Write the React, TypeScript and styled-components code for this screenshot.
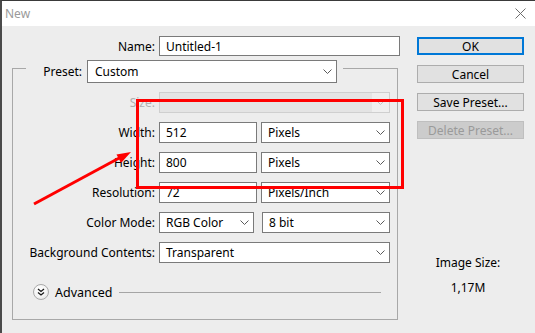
import React from "react";
import styled, { createGlobalStyle } from "styled-components";

const GlobalStyle = createGlobalStyle`
  html, body {
    margin: 0;
    padding: 0;
    background: #ededed;
  }
  body {
    font-family: "Noto Sans", "Liberation Sans", sans-serif;
    font-size: 12px;
    color: #000;
  }
`;

const Chevron = ({ color = "#5a5a5a" }: { color?: string }) => (
  <svg width="9" height="5" viewBox="0 0 9 5">
    <path d="M0.5 0.5 L4.5 4.5 L8.5 0.5" fill="none" stroke={color} strokeWidth="1" />
  </svg>
);

interface DropSelectProps {
  value?: string;
  width?: number;
  disabled?: boolean;
}

function DropSelect(props: DropSelectProps) {
  return (
    <SelectBox $w={props.width} $disabled={props.disabled}>
      <SelectText>{props.value}</SelectText>
      <DropButton $disabled={props.disabled}>
        <Chevron color={props.disabled ? "#c4c4c4" : "#5a5a5a"} />
      </DropButton>
    </SelectBox>
  );
}

interface FieldRowProps {
  label: string;
  disabled?: boolean;
  labelWidth?: number;
  gap?: number;
  children: React.ReactNode;
}

function FieldRow(props: FieldRowProps) {
  return (
    <Row $labelW={props.labelWidth ?? 142}>
      <Label $disabled={props.disabled}>{props.label}</Label>
      <Fields $gap={props.gap ?? 4}>{props.children}</Fields>
    </Row>
  );
}

function App() {
  return (
    <Screen>
      <GlobalStyle />
      <Window>
        <TitleBar>
          <Title>New</Title>
          <svg width="11" height="11" viewBox="0 0 11 11">
            <path d="M0.5 0.5 L10.5 10.5 M10.5 0.5 L0.5 10.5" stroke="#6d6d6d" strokeWidth="1" />
          </svg>
        </TitleBar>

        <Body>
          <Main>
            <FieldRow label="Name:" labelWidth={143}>
              <TextBox>Untitled-1</TextBox>
            </FieldRow>

            <Group>
              <Legend>
                <LegendInner>
                  <PresetLabel>Preset:</PresetLabel>
                  <PresetSelect>
                    <SelectText>Custom</SelectText>
                    <DropButton>
                      <Chevron />
                    </DropButton>
                  </PresetSelect>
                </LegendInner>
              </Legend>

              <GroupRows>
                <FieldRow label="Size:" disabled>
                  <DropSelect disabled />
                </FieldRow>
                <FieldRow label="Width:">
                  <TextBox $w={98}>512</TextBox>
                  <DropSelect value="Pixels" />
                </FieldRow>
                <FieldRow label="Height:">
                  <TextBox $w={98}>800</TextBox>
                  <DropSelect value="Pixels" />
                </FieldRow>
                <FieldRow label="Resolution:">
                  <TextBox $w={98}>72</TextBox>
                  <DropSelect value="Pixels/Inch" />
                </FieldRow>
                <FieldRow label="Color Mode:" gap={8}>
                  <DropSelect value="RGB Color" width={95} />
                  <DropSelect value="8 bit" />
                </FieldRow>
                <FieldRow label="Background Contents:">
                  <DropSelect value="Transparent" />
                </FieldRow>

                <Advanced>
                  <AdvIcon>
                    <svg width="8" height="8" viewBox="0 0 8 8">
                      <path
                        d="M1 1 L4 3.5 L7 1 M1 4.5 L4 7 L7 4.5"
                        fill="none"
                        stroke="#1a1a1a"
                        strokeWidth="1.3"
                      />
                    </svg>
                  </AdvIcon>
                  <AdvText>Advanced</AdvText>
                  <AdvLine />
                </Advanced>
              </GroupRows>
            </Group>
          </Main>

          <Side>
            <DialogButton $primary>OK</DialogButton>
            <DialogButton>Cancel</DialogButton>
            <DialogButton>Save Preset...</DialogButton>
            <DialogButton $disabled>Delete Preset...</DialogButton>
            <ImageSize>
              <span>Image Size:</span>
              <span>1,17M</span>
            </ImageSize>
          </Side>
        </Body>
      </Window>

      {/* red annotation drawn over the dialog */}
      <RedBox />
      <ArrowLayer width="535" height="333" viewBox="0 0 535 333">
        <line x1="34" y1="204" x2="122" y2="156.5" stroke="#ff0000" strokeWidth="3" />
        <polygon points="131,152 116.5,154.5 121,163" fill="#ff0000" />
      </ArrowLayer>
    </Screen>
  );
}

const Screen = styled.div`
  position: relative;
  width: 535px;
  height: 333px;
  overflow: hidden;
`;

const Window = styled.div`
  box-sizing: border-box;
  width: 100%;
  height: 100%;
  border-top: 1px solid #3a3a3a;
  border-left: 2px solid #4a4a4a;
  background: #ededed;
  display: flex;
  flex-direction: column;
`;

const TitleBar = styled.div`
  height: 25px;
  background: #fff;
  display: flex;
  align-items: center;
  justify-content: space-between;
  padding: 0 9px 0 3px;
  flex-shrink: 0;
`;

const Title = styled.span`
  color: #9a9a9a;
`;

const Body = styled.div`
  display: flex;
  gap: 17px;
  padding: 10px 11px 0 10px;
`;

const Main = styled.div`
  width: 388px;
  display: flex;
  flex-direction: column;
`;

const Row = styled.div<{ $labelW: number }>`
  display: grid;
  grid-template-columns: ${(p) => p.$labelW}px 1fr;
  column-gap: 4px;
  align-items: center;
  height: 20px;
`;

const Label = styled.span<{ $disabled?: boolean }>`
  text-align: right;
  white-space: nowrap;
  color: ${(p) => (p.$disabled ? "#b0b0b0" : "#000")};
`;

const Fields = styled.div<{ $gap: number }>`
  display: flex;
  gap: ${(p) => p.$gap}px;
  height: 100%;
`;

const TextBox = styled.div<{ $w?: number }>`
  box-sizing: border-box;
  height: 100%;
  ${(p) => (p.$w ? `width: ${p.$w}px;` : "flex: 1;")}
  border: 1px solid #7a7a7a;
  background: #fff;
  padding: 0 6px;
  display: flex;
  align-items: center;
`;

const SelectBox = styled.div<{ $w?: number; $disabled?: boolean }>`
  box-sizing: border-box;
  height: 100%;
  ${(p) => (p.$w ? `width: ${p.$w}px;` : "flex: 1;")}
  border: 1px solid ${(p) => (p.$disabled ? "#cfcfcf" : "#7a7a7a")};
  background: ${(p) => (p.$disabled ? "#e4e4e4" : "#fff")};
  display: flex;
  align-items: center;
`;

const SelectText = styled.span`
  flex: 1;
  padding-left: 6px;
  white-space: nowrap;
`;

const DropButton = styled.span<{ $disabled?: boolean }>`
  width: 17px;
  height: 100%;
  display: flex;
  align-items: center;
  justify-content: center;
  background: ${(p) => (p.$disabled ? "#efefef" : "transparent")};
`;

const Group = styled.fieldset`
  box-sizing: border-box;
  width: 386px;
  margin: -3px 0 0 0;
  padding: 0 7px 19px 0;
  border: 1px solid #a8a8a8;
  min-width: 0;
`;

const Legend = styled.legend`
  margin-left: 13px;
  padding: 7px 6px 0 0;
`;

const LegendInner = styled.div`
  display: flex;
  align-items: center;
  gap: 5px;
  height: 23px;
  width: 311px;
`;

const PresetLabel = styled.span`
  width: 56px;
  text-align: right;
`;

const PresetSelect = styled.div`
  box-sizing: border-box;
  width: 250px;
  height: 100%;
  border: 1px solid #7a7a7a;
  background: #fff;
  display: flex;
  align-items: center;

  & > span:first-child {
    padding-left: 7px;
  }
`;

const GroupRows = styled.div`
  display: flex;
  flex-direction: column;
  gap: 9px;
  padding-top: 9px;

  & > ${Row} {
    height: 21px;
  }
`;

const Advanced = styled.div`
  display: flex;
  align-items: center;
  padding-left: 20px;
  margin-top: 12px;
  height: 16px;
`;

const AdvIcon = styled.span`
  box-sizing: border-box;
  width: 16px;
  height: 16px;
  flex-shrink: 0;
  border-radius: 50%;
  border: 1px solid #a9a9a9;
  background: radial-gradient(circle at 40% 35%, #ffffff 0%, #f4f4f4 55%, #d9d9d9 100%);
  display: flex;
  align-items: center;
  justify-content: center;
`;

const AdvText = styled.span`
  margin-left: 6px;
  font-size: 12.5px;
`;

const AdvLine = styled.div`
  flex: 1;
  height: 1px;
  background: #a5a5a5;
  margin: 1px 9px 0 6px;
`;

const Side = styled.div`
  width: 107px;
  display: flex;
  flex-direction: column;
  gap: 10px;
  padding-top: 1px;
`;

const DialogButton = styled.div<{ $primary?: boolean; $disabled?: boolean }>`
  box-sizing: border-box;
  height: 18px;
  display: flex;
  align-items: center;
  justify-content: center;
  background: ${(p) => (p.$disabled ? "#cccccc" : "#e1e1e1")};
  border: ${(p) =>
    p.$primary ? "2px solid #0078d7" : p.$disabled ? "1px solid #bfbfbf" : "1px solid #adadad"};
  color: ${(p) => (p.$disabled ? "#9a9a9a" : "#000")};
  white-space: nowrap;
`;

const ImageSize = styled.div`
  margin-top: 105px;
  display: flex;
  flex-direction: column;
  align-items: center;
  gap: 8px;
  padding-right: 5px;
`;

const RedBox = styled.div`
  position: absolute;
  left: 136px;
  top: 99px;
  width: 268px;
  height: 90px;
  box-sizing: border-box;
  border: 3px solid #ff0000;
  pointer-events: none;
`;

const ArrowLayer = styled.svg`
  position: absolute;
  left: 0;
  top: 0;
  pointer-events: none;
`;

export default App;
